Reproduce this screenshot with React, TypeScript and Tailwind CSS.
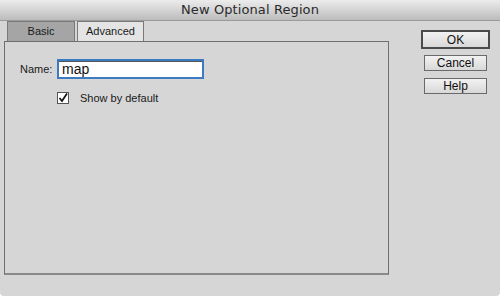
import React from "react";

export default function App() {
  const font = { fontFamily: '"Liberation Sans", Arial, sans-serif' };
  const titleFont = { fontFamily: '"DejaVu Sans", "Liberation Sans", sans-serif' };
  return (
    <div className="w-[500px] h-[296px] bg-[#d6d6d6] flex flex-col overflow-hidden rounded-b-[4px]" style={font}>
      <div className="h-[21px] shrink-0 bg-gradient-to-b from-[#ececec] via-[#d4d4d4] to-[#bcbcbc] border-b border-[#9a9a9a] flex items-center justify-center">
        <span className="text-[13px] text-[#2a2a2a] tracking-[0.1px]" style={titleFont}>New Optional Region</span>
      </div>
      <div className="flex flex-1">
        <div className="flex flex-col pl-[4px] w-[389px]">
          <div className="flex h-[20px] pl-[3px] gap-[2px]">
            <div className="w-[68px] h-[20px] bg-[#a5a5a5] border border-[#7a7a7a] border-b-0 flex items-center justify-center text-[11px] text-[#1a1a1a]">Basic</div>
            <div className="w-[67px] h-[20px] bg-[#e4e4e4] border border-[#7a7a7a] border-b-0 flex items-center justify-center text-[11px] text-[#1a1a1a]">Advanced</div>
          </div>
          <div className="h-[234px] border border-[#6f6f6f] border-b-2 border-b-[#8a8a8a] bg-[#d6d6d6] flex flex-col">
            <div className="flex items-center mt-[17px] ml-[15px]">
              <span className="text-[11px] text-[#1a1a1a] w-[37px]">Name:</span>
              <div className="w-[147px] h-[20px] bg-white border-2 border-[#3d7ac4] shadow-[inset_0_1px_0_#555] flex items-center pl-[3px] text-[14px] text-[#111]">map</div>
            </div>
            <div className="flex items-center mt-[11px] ml-[52px]">
              <div className="w-[12px] h-[12px] bg-white border border-[#555] flex items-center justify-center">
                <svg width="10" height="10" viewBox="0 0 10 10">
                  <path d="M1.5 5 L4 8 L9 0.5" fill="none" stroke="#111" strokeWidth="1.7" />
                </svg>
              </div>
              <span className="ml-[11px] text-[11px] text-[#1a1a1a]">Show by default</span>
            </div>
          </div>
        </div>
        <div className="flex flex-col items-center ml-[32px] mt-[9px] w-[69px] gap-[6px]">
          <div className="w-[69px] h-[19px] border-2 border-[#4a4a4a] bg-gradient-to-b from-[#f2f2f2] to-[#d8d8d8] flex items-center justify-center text-[12px] text-[#111]">OK</div>
          <div className="w-[63px] h-[16px] border border-[#6a6a6a] bg-gradient-to-b from-[#f2f2f2] to-[#d8d8d8] flex items-center justify-center text-[12px] text-[#111]">Cancel</div>
          <div className="w-[63px] h-[16px] mt-[1px] border border-[#6a6a6a] bg-gradient-to-b from-[#f2f2f2] to-[#d8d8d8] flex items-center justify-center text-[12px] text-[#111]">Help</div>
        </div>
      </div>
    </div>
  );
}
